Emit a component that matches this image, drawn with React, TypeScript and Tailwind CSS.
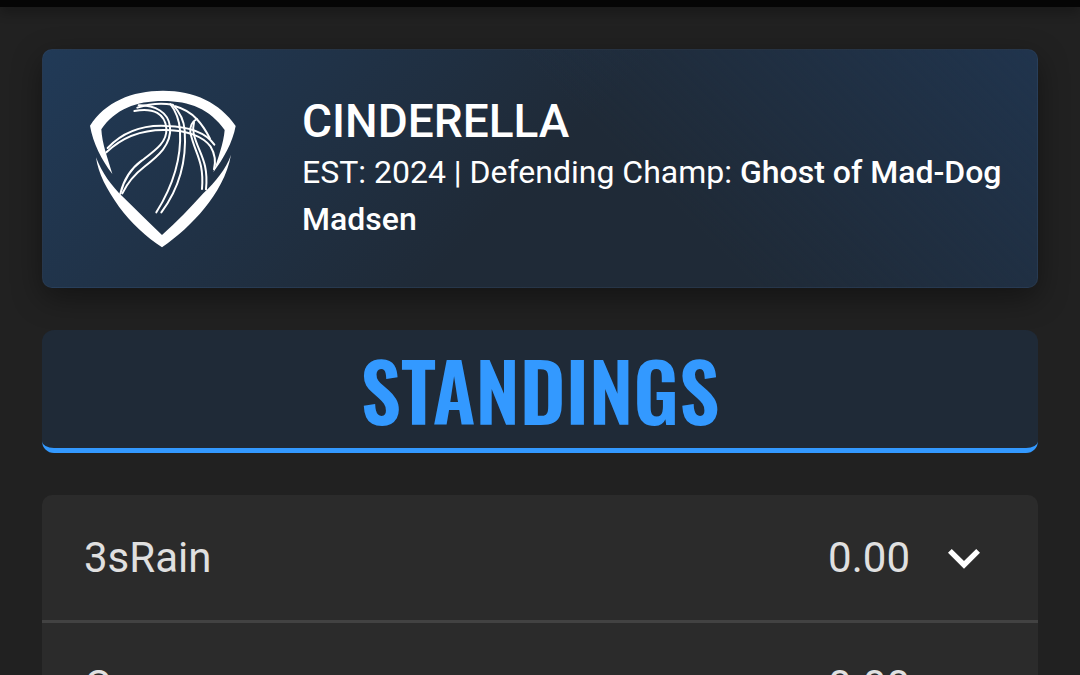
import { useState } from 'react';

const teams = [
  { name: '3sRain', points: '0.00' },
  { name: 'C', points: '0.00' },
];

function LeagueLogo() {
  return (
    <svg viewBox="30 30 438 474" className="h-[158px] w-[146px] shrink-0" fill="none" aria-hidden="true">
      <path
        fill="#fff"
        d="M30 137C75 66 155 32 249 32S420 68 467 138C458 188 430 236 400 277C414 234 431 190 434 150C390 88 330 63 249 63S105 88 64 148C66 190 83 235 97 282C65 240 39 190 30 137Z"
      />
      <path fill="#fff" d="M48 232C65 277 94 318 130 352C170 390 204 426 246 465C290 427 331 383 370 340C407 304 438 268 453 224C443 285 409 340 374 384C337 430 292 470 246 502C199 471 153 428 117 380C81 330 54 280 48 232Z" />
      <g stroke="#fff" strokeWidth="6" strokeLinecap="round">
        <path d="M83 204C130 155 190 134 260 138C320 140 376 155 403 194" />
        <path d="M79 217C132 166 194 148 260 150C320 151 370 169 392 200C404 220 408 244 402 268" />
        <path d="M176 76C226 76 265 96 270 140C276 194 233 229 193 260C163 283 141 311 127 340" />
        <path d="M163 93C222 82 255 102 259 145C262 187 226 211 185 242C155 264 132 296 121 341" />
        <path d="M271 72C288 94 298 121 300 151C304 223 288 303 229 397" />
        <path d="M280 76C301 98 312 124 314 151C320 236 303 318 244 397" />
        <path d="M172 83C205 72 240 68 278 74" />
        <path d="M286 79C311 86 332 98 350 117C337 125 329 137 331 157C344 220 373 241 366 327" />
        <path d="M342 127C339 139 339 150 341 160C353 216 387 242 378 328" />
        <path d="M350 117C370 138 380 156 390 176" />
      </g>
    </svg>
  );
}

function LeagueCard() {
  return (
    <section className="flex items-center rounded-[10px] border border-slate-600/20 bg-[#1f2a37] bg-[linear-gradient(225deg,#20344d_0%,transparent_42%),linear-gradient(135deg,#213a57_0%,#1f2a37_50%)] pt-10 pr-8 pb-[39px] pl-[47px] shadow-[0_10px_30px_rgba(0,0,0,0.4)]">
      <LeagueLogo />
      <div className="ml-[66px] pb-0.5 text-white">
        <h1 className="text-[46px] leading-[56px] font-medium">CINDERELLA</h1>
        <p className="text-[32px] leading-[47px]">
          EST: 2024 | Defending Champ: <strong className="font-medium">Ghost of Mad-Dog Madsen</strong>
        </p>
      </div>
    </section>
  );
}

function TeamRow({ name, points }: { name: string; points: string }) {
  const [open, setOpen] = useState(false);
  return (
    <li className="border-b-[3px] border-[#424242]">
      <button
        type="button"
        aria-expanded={open}
        onClick={() => setOpen(!open)}
        className="flex h-[125px] w-full items-center px-[42px] text-left text-[42px] text-[#e0e0e0]"
      >
        <span className="flex-1">{name}</span>
        <span>{points}</span>
        <svg viewBox="0 0 24 24" className="ml-[22px] size-16 fill-white" aria-hidden="true">
          <path d="M7.41 8.59 12 13.17l4.59-4.58L18 10l-6 6-6-6z" />
        </svg>
      </button>
    </li>
  );
}

export default function App() {
  return (
    <div className="h-screen overflow-hidden bg-[#212121] font-['Roboto',sans-serif]">
      <header className="h-[7px] bg-[#050505] shadow-[0_4px_12px_rgba(0,0,0,0.4)]" />
      <main className="flex flex-col gap-[42px] p-[42px]">
        <LeagueCard />
        <h2 className="rounded-[12px] border-b-[5px] border-[#3399ff] bg-[#1f2a37] text-center font-['Oswald','Liberation_Sans_Narrow',sans-serif] text-[80px] leading-[118px] font-semibold text-[#3399ff]">
          STANDINGS
        </h2>
        <ul className="overflow-hidden rounded-[10px] bg-[#2b2b2b]">
          {teams.map((team) => (
            <TeamRow key={team.name} {...team} />
          ))}
        </ul>
      </main>
    </div>
  );
}
